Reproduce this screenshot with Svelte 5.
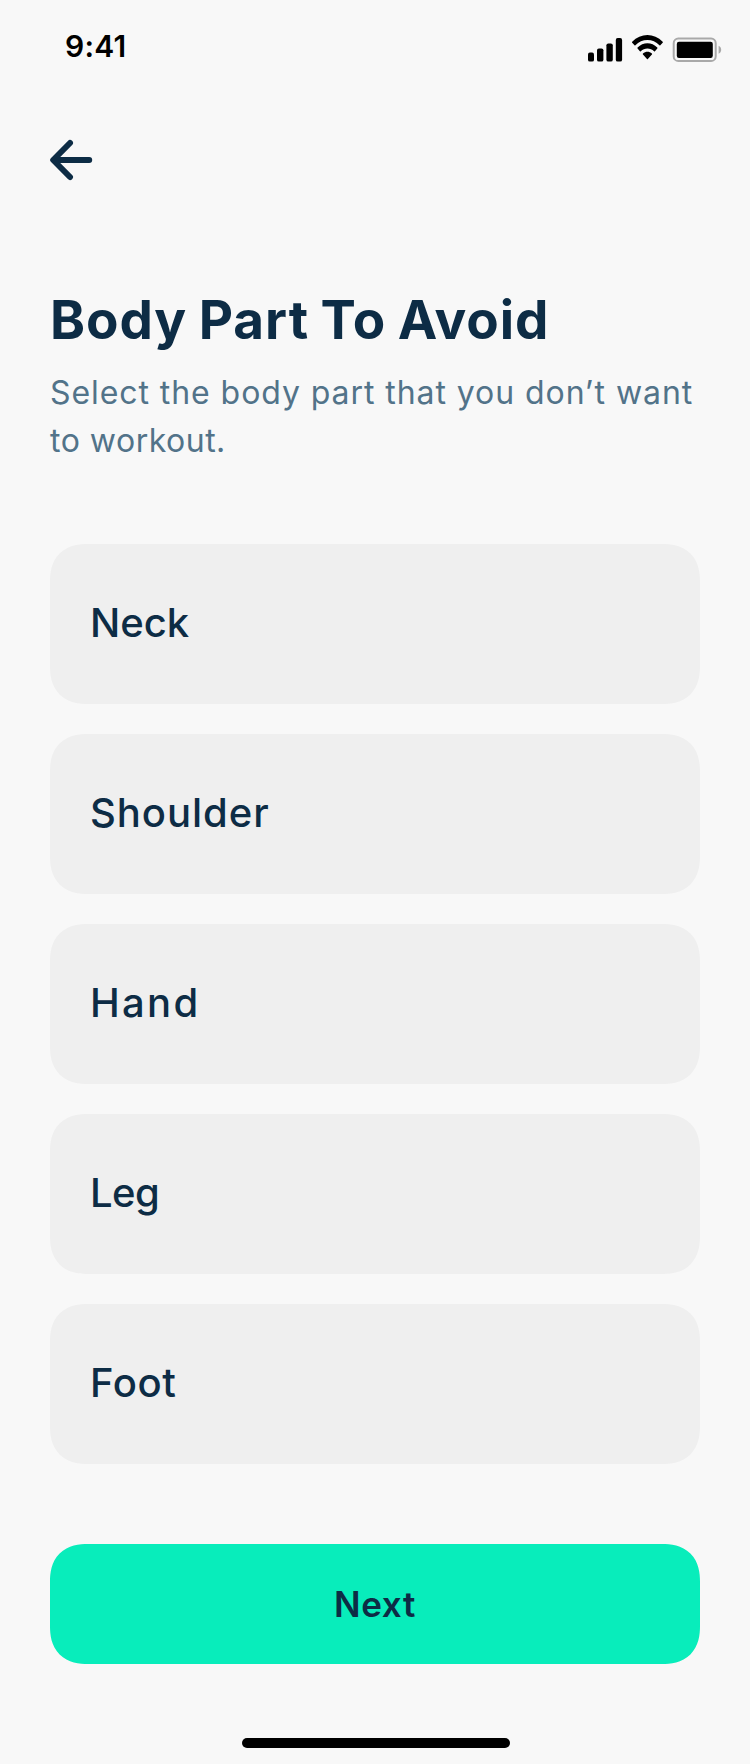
<script>
  const parts = [
    { name: 'Neck', tracking: 0 },
    { name: 'Shoulder', tracking: 0.97 },
    { name: 'Hand', tracking: 2.3 },
    { name: 'Leg', tracking: -0.6 },
    { name: 'Foot', tracking: 0.6 }
  ];
</script>

<main class="screen">
  <header class="status">
    <span class="time">9:41</span>
    <svg class="indicators" width="136" height="30" viewBox="587 33 136 30" aria-hidden="true">
      <rect x="588" y="52.6" width="6" height="9" rx="1.9" />
      <rect x="597" y="48.4" width="6.4" height="13.2" rx="1.9" />
      <rect x="606.4" y="43.4" width="6.4" height="18.2" rx="1.9" />
      <rect x="615.8" y="38" width="6.3" height="23.6" rx="1.9" />
      <g transform="translate(632 34.9) scale(2.02 2.22)">
        <path d="M7.637 2.277c2.216 0 4.347.852 5.953 2.379.121.117.314.116.433-.004l1.157-1.166a.322.322 0 0 0-.003-.456c-4.216-4.04-10.866-4.04-15.081 0a.322.322 0 0 0-.003.456L1.25 4.652c.119.12.312.122.433.004 1.607-1.527 3.738-2.379 5.954-2.379Z" />
        <path d="M7.637 6.073c1.217 0 2.391.452 3.293 1.27.122.116.315.113.434-.006l1.155-1.167a.323.323 0 0 0-.005-.459c-2.748-2.556-7.004-2.556-9.752 0a.323.323 0 0 0-.005.459l1.155 1.167c.119.119.311.122.433.006.902-.817 2.075-1.27 3.292-1.27Z" />
        <path d="M9.95 8.627a.315.315 0 0 1-.093.23L7.86 10.873a.312.312 0 0 1-.443 0L5.419 8.857a.315.315 0 0 1 .009-.457c1.275-1.077 3.145-1.077 4.42 0a.32.32 0 0 1 .102.227Z" />
      </g>
      <rect x="673.7" y="38.6" width="42" height="22.4" rx="4.6" fill="none" stroke="#a9a9a9" stroke-width="2" />
      <rect x="676.8" y="41.8" width="36" height="16.2" rx="2.2" />
      <path d="M718.6 45.8v8c1.6-.7 2.6-2.2 2.6-4s-1-3.300-2.600-4Z" fill="#a9a9a9" />
    </svg>
  </header>

  <nav>
    <button class="back" aria-label="Back">
      <svg width="44" height="42" viewBox="49 139 44 42" aria-hidden="true">
        <path d="M70 143 53.200 160 70 177M54 160H89.200" />
      </svg>
    </button>
  </nav>

  <section class="intro">
    <h1>Body Part To Avoid</h1>
    <p>Select the body part that you don’t want<br /><span class="last">to workout.</span></p>
  </section>

  <ul>
    {#each parts as part}
      <li style:letter-spacing="{part.tracking}px">{part.name}</li>
    {/each}
  </ul>

  <button class="next">Next</button>
  <div class="home"></div>
</main>

<style>
  :global(body) {
    background: #f8f8f8;
  }
  .screen {
    display: flex;
    flex-direction: column;
    box-sizing: border-box;
    height: 1764px;
    padding: 0 50px;
    background: #f8f8f8;
    color: #0d2c45;
    font-family: Inter, 'Open Sans', sans-serif;
  }
  button {
    border: 0;
    padding: 0;
    color: inherit;
    font-family: inherit;
  }
  .status {
    display: flex;
    justify-content: space-between;
    align-items: center;
    height: 30px;
    margin: 33px -23px 0 15px;
    color: #000;
  }
  .time {
    font-size: 30px;
    font-weight: 600;
    line-height: 30px;
    padding-bottom: 4px;
    letter-spacing: 0.2px;
  }
  .indicators {
    display: block;
  }
  nav {
    height: 42px;
    margin-top: 76px;
  }
  .back {
    display: block;
    margin-left: -1px;
    background: none;
  }
  .back svg {
    display: block;
    fill: none;
    stroke: currentColor;
    stroke-width: 6;
    stroke-linecap: round;
    stroke-linejoin: round;
  }
  .intro {
    margin-top: 101px;
    height: 182px;
    white-space: nowrap;
  }
  h1 {
    margin: 0 0 11px;
    font-size: 53px;
    font-weight: 700;
    line-height: 76px;
    letter-spacing: 0.95px;
    word-spacing: -2px;
  }
  p {
    margin: 0;
    color: #527389;
    font-size: 32px;
    line-height: 48px;
    letter-spacing: 0.93px;
  }
  .last {
    letter-spacing: 0.5px;
  }
  ul {
    display: flex;
    flex-direction: column;
    gap: 30px;
    margin: 80px 0 0;
    padding: 0;
    list-style: none;
  }
  li {
    box-sizing: border-box;
    height: 160px;
    padding-left: 40px;
    border-radius: 32px;
    background: #efefef;
    font-size: 40px;
    font-weight: 500;
    line-height: 158px;
  }
  .next {
    flex: none;
    height: 120px;
    margin-top: 80px;
    border-radius: 32px;
    background: #08edbb;
    font-size: 35px;
    font-weight: 600;
    line-height: 120px;
    letter-spacing: 0.6px;
  }
  .home {
    width: 268px;
    height: 10px;
    margin: 74px 0 0 192px;
    border-radius: 5px;
    background: #000;
  }
  @supports (corner-shape: superellipse(1.25)) {
    li,
    .next {
      border-radius: 38px;
      corner-shape: superellipse(1.25);
    }
  }
</style>
